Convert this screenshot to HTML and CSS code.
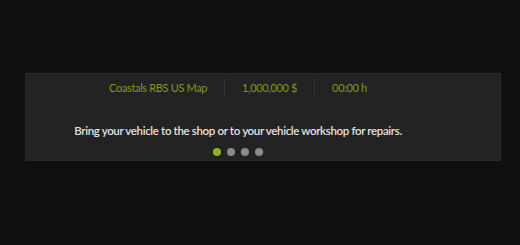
FILE: index.html
```html
<!DOCTYPE html>
<html>
<head>
    <title>Hint panel</title>
    <meta name="viewport" content="width=device-width, initial-scale=1.0">
    <link rel="stylesheet" href="styles.css">
</head>
<body>
    <div class="hint-panel">
        <div class="info-row">
            <span class="info-item">Coastals RBS US Map</span>
            <span class="divider"></span>
            <span class="info-item">1,000,000 $</span>
            <span class="divider"></span>
            <span class="info-item">00:00 h</span>
        </div>
        <p class="hint-text">Bring your vehicle to the shop or to your vehicle workshop for repairs.</p>
        <div class="dots">
            <span class="dot active"></span>
            <span class="dot"></span>
            <span class="dot"></span>
            <span class="dot"></span>
        </div>
    </div>
</body>
</html>
```
FILE: styles.css
```css
body {
    margin: 0;
    background: #101010;
    font-family: Lato, "Open Sans", sans-serif;
}
.hint-panel {
    margin: 73px 0 0 25px;
    width: 476px;
    height: 88px;
    box-sizing: border-box;
    padding: 3px 50px 0 0;
    background: #232323;
    border: 1px solid #2a2a2a;
    display: flex;
    flex-direction: column;
    align-items: center;
}
.info-row {
    display: flex;
    align-items: center;
    height: 20px;
}
.info-item {
    color: #7e9a1d;
    font-size: 11px;
    letter-spacing: -0.35px;
    padding: 0 17px;
}
.divider {
    width: 1px;
    height: 19px;
    background: #363636;
}
.hint-text {
    margin: 26px 0 0;
    color: #e2e2e2;
    font-size: 11.5px;
    font-weight: 600;
    letter-spacing: -0.35px;
    line-height: 16px;
}
.dots {
    display: flex;
    gap: 6px;
    margin-top: 9px;
}
.dot {
    width: 8px;
    height: 8px;
    border-radius: 50%;
    background: #8a8a8a;
}
.dot.active {
    background: #8db21c;
}
```
